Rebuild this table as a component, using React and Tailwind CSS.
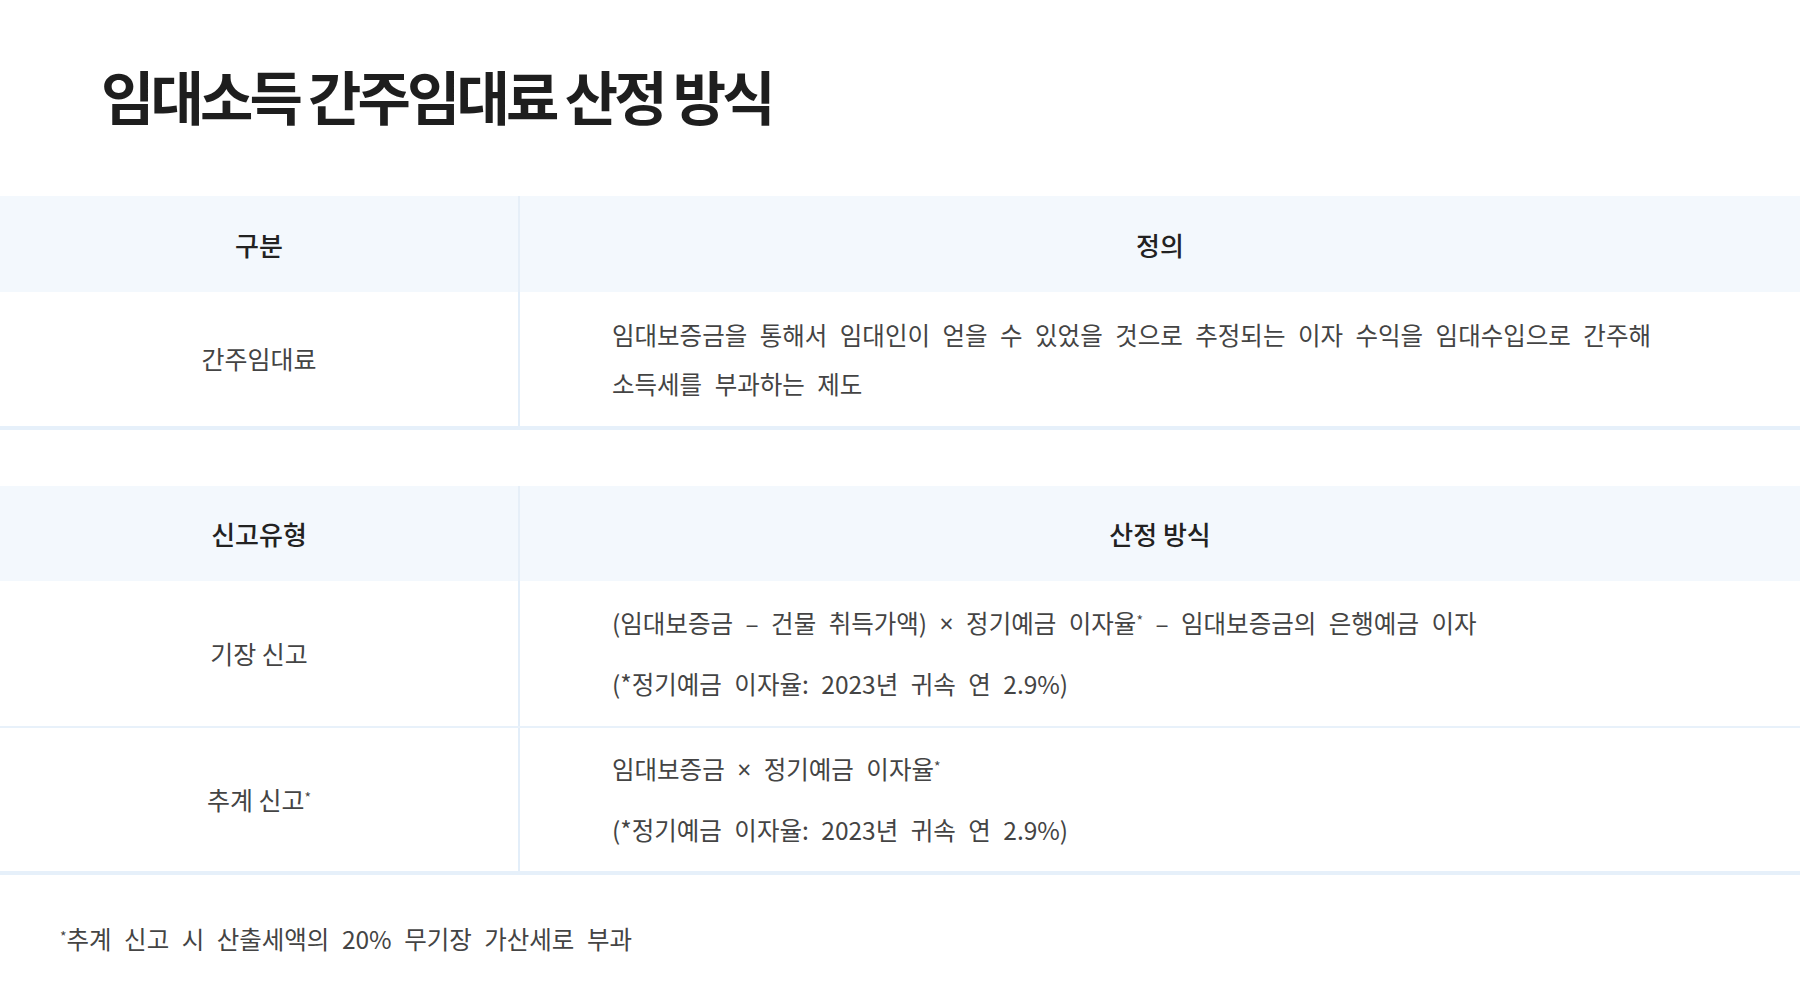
const cellBase = "flex items-center";

function HeadRow({ left, right, className }) {
  return (
    <div className={`grid grid-cols-[520px_1fr] bg-[#f3f8fd] ${className}`}>
      <div className={`${cellBase} justify-center border-r-2 border-[#e6eff8] text-[26px] font-medium text-[#222]`}>{left}</div>
      <div className={`${cellBase} justify-center text-[26px] font-medium text-[#222]`}>{right}</div>
    </div>
  );
}

function BodyRow({ left, children, className }) {
  return (
    <div className={`grid grid-cols-[520px_1fr] ${className}`}>
      <div className={`${cellBase} justify-center border-r-2 border-[#e3eef9] text-[25px] text-[#444]`}>{left}</div>
      <div className={`${cellBase} pl-[92px] pr-[60px] text-[24.5px] text-[#444] [word-spacing:7px]`}>{children}</div>
    </div>
  );
}

const Times = () => <span className="font-['Noto_Sans',sans-serif]">×</span>;
const Star = () => <sup className="text-[14px] [word-spacing:0]">*</sup>;

export default function App() {
  return (
    <div className="w-[1800px] h-[1000px] bg-white font-['Noto_Sans_CJK_KR','Noto_Sans',sans-serif] overflow-hidden">
      <div className="h-[196px] pl-[101px] pt-[66px]">
        <h1 className="text-[58px] font-bold leading-none tracking-[-3.9px] text-[#1e1e1e]">임대소득 간주임대료 산정 방식</h1>
      </div>

      <HeadRow left="구분" right="정의" className="h-[96px]" />
      <BodyRow left="간주임대료" className="h-[138px] border-b-4 border-[#e6f0fa]">
        <p className="leading-[49px]">
          임대보증금을 통해서 임대인이 얻을 수 있었을 것으로 추정되는 이자 수익을 임대수입으로 간주해
          <br />
          소득세를 부과하는 제도
        </p>
      </BodyRow>

      <div className="h-[56px]" />

      <HeadRow left="신고유형" right="산정 방식" className="h-[95px]" />
      <BodyRow left="기장 신고" className="h-[147px] border-b-2 border-[#e8f1fa]">
        <div className="leading-[60px]">
          <p>(임대보증금 – 건물 취득가액) <Times /> 정기예금 이자율<Star /> – 임대보증금의 은행예금 이자</p>
          <p>(*정기예금 이자율: 2023년 귀속 연 2.9%)</p>
        </div>
      </BodyRow>
      <BodyRow
        left={<span>추계 신고<Star /></span>}
        className="h-[147px] border-b-4 border-[#e6f0fa]"
      >
        <div className="leading-[60px]">
          <p>임대보증금 <Times /> 정기예금 이자율<Star /></p>
          <p>(*정기예금 이자율: 2023년 귀속 연 2.9%)</p>
        </div>
      </BodyRow>

      <p className="pl-[60px] pt-[46px] text-[24.5px] text-[#444] [word-spacing:7px]">
        <Star />추계 신고 시 산출세액의 20% 무기장 가산세로 부과
      </p>
    </div>
  );
}
